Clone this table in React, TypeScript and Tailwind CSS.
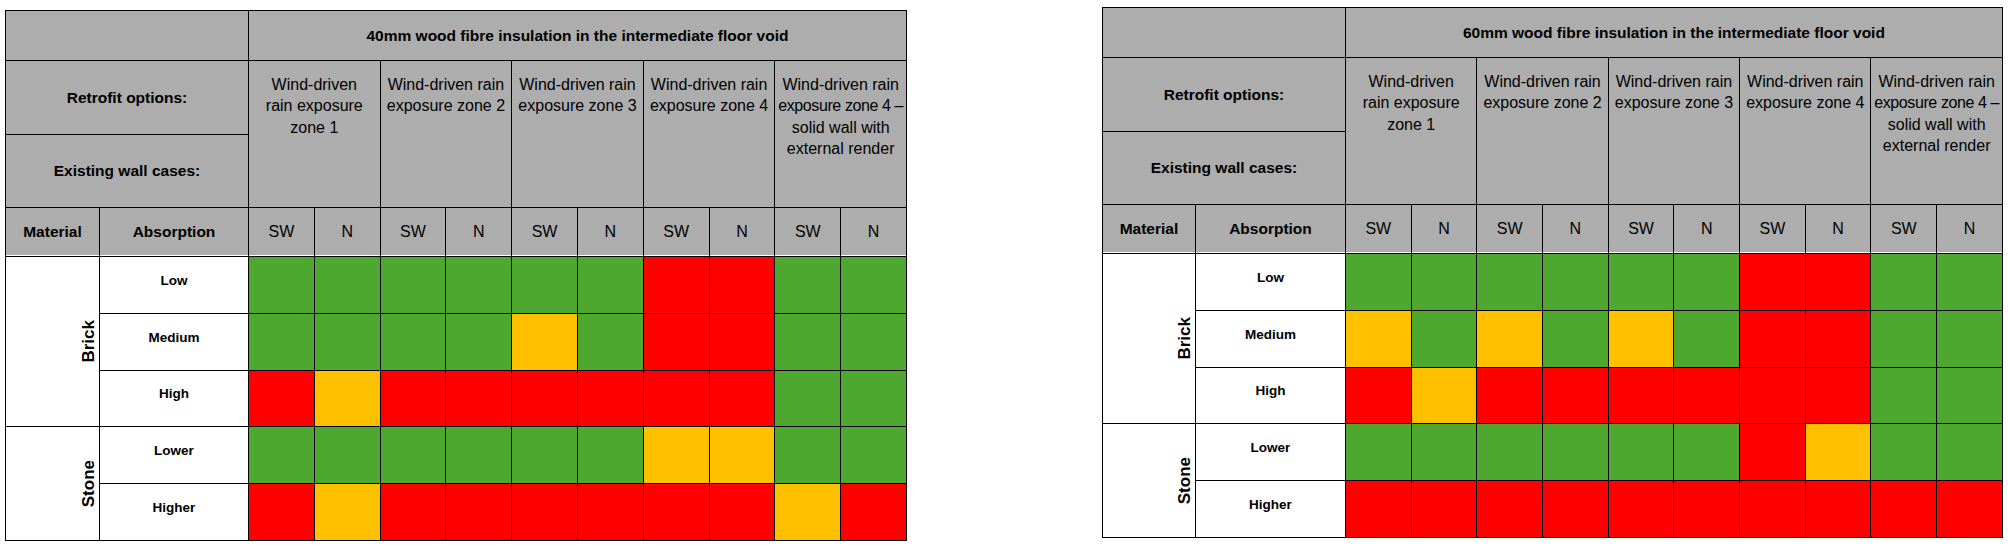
import React from "react";

type C = "G" | "A" | "R";

const fill: Record<C, string> = {
  G: "bg-[#4ea72e]",
  A: "bg-[#ffc000]",
  R: "bg-[#ff0000]",
};

const zones: React.ReactNode[] = [
  <>Wind-driven<br />rain exposure<br />zone 1</>,
  <>Wind-driven rain<br />exposure zone 2</>,
  <>Wind-driven rain<br />exposure zone 3</>,
  <>Wind-driven rain<br />exposure zone 4</>,
  <>Wind-driven rain<br /><span className="tracking-[-0.4px]">exposure zone 4 –</span><br />solid wall with<br />external render</>,
];

const table1 = {
  title: "40mm wood fibre insulation in the intermediate floor void",
  rows: [
    "GGGGGGRRGG",
    "GGGGAGRRGG",
    "RARRRRRRGG",
    "GGGGGGAAGG",
    "RARRRRRRAR",
  ],
  cols: "grid-cols-[94px_149px_repeat(10,65.8px)]",
  top: "mt-[10px]",
};

const table2 = {
  title: "60mm wood fibre insulation in the intermediate floor void",
  rows: [
    "GGGGGGRRGG",
    "AGAGAGRRGG",
    "RARRRRRRGG",
    "GGGGGGRAGG",
    "RRRRRRRRRR",
  ],
  cols: "grid-cols-[93px_150px_repeat(10,65.7px)]",
  top: "mt-[7px]",
};

const cell = "border-r border-b border-black";
const head = `${cell} bg-[#adadad] text-black`;

function Matrix({ t }: { t: typeof table1 }) {
  const labels = ["Low", "Medium", "High", "Lower", "Higher"];
  return (
    <div
      className={`${t.top} grid ${t.cols} grid-rows-[50px_74px_73px_49px_57px_57px_56px_57px_57px] border-l border-t border-black`}
    >
      <div className={`${head} col-span-2`} />
      <div className={`${head} col-span-10 flex items-center justify-center text-[15.5px] font-bold`}>
        {t.title}
      </div>

      <div className={`${head} col-span-2 flex items-center justify-center text-[15.5px] font-bold`}>
        Retrofit options:
      </div>
      {zones.map((z, i) => (
        <div
          key={i}
          className={`${head} col-span-2 row-span-2 whitespace-nowrap pt-[13px] text-center text-[16px] leading-[21.3px]`}
        >
          {z}
        </div>
      ))}
      <div className={`${head} col-span-2 flex items-center justify-center text-[15.5px] font-bold`}>
        Existing wall cases:
      </div>

      <div className={`${head} flex items-center justify-center text-[15.5px] font-bold shadow-[inset_0_-1px_0_white]`}>
        Material
      </div>
      <div className={`${head} flex items-center justify-center text-[15.5px] font-bold shadow-[inset_0_-1px_0_white]`}>
        Absorption
      </div>
      {Array.from({ length: 10 }).map((_, i) => (
        <div
          key={i}
          className={`${head} flex items-center justify-center text-[16px] shadow-[inset_0_-1px_0_white]`}
        >
          {i % 2 === 0 ? "SW" : "N"}
        </div>
      ))}

      {t.rows.map((r, ri) => (
        <React.Fragment key={ri}>
          {ri === 0 && (
            <div className={`${cell} row-span-3 flex items-center justify-end bg-white pr-[2px]`}>
              <span className="rotate-180 text-[17px] font-bold leading-none [writing-mode:vertical-rl]">Brick</span>
            </div>
          )}
          {ri === 3 && (
            <div className={`${cell} row-span-2 flex items-center justify-end bg-white pr-[2px]`}>
              <span className="rotate-180 text-[17px] font-bold leading-none [writing-mode:vertical-rl]">Stone</span>
            </div>
          )}
          <div className={`${cell} flex items-center justify-center bg-white pb-2 text-[13.5px] font-bold`}>
            {labels[ri]}
          </div>
          {r.split("").map((c, ci) => (
            <div key={ci} className={`${cell} ${fill[c as C]}`} />
          ))}
        </React.Fragment>
      ))}
    </div>
  );
}

export default function App() {
  return (
    <div className="flex h-[547px] w-[2008px] items-start gap-[195px] bg-white pl-[5px] font-['Liberation_Sans',Arial,sans-serif] text-black">
      <Matrix t={table1} />
      <Matrix t={table2} />
    </div>
  );
}
